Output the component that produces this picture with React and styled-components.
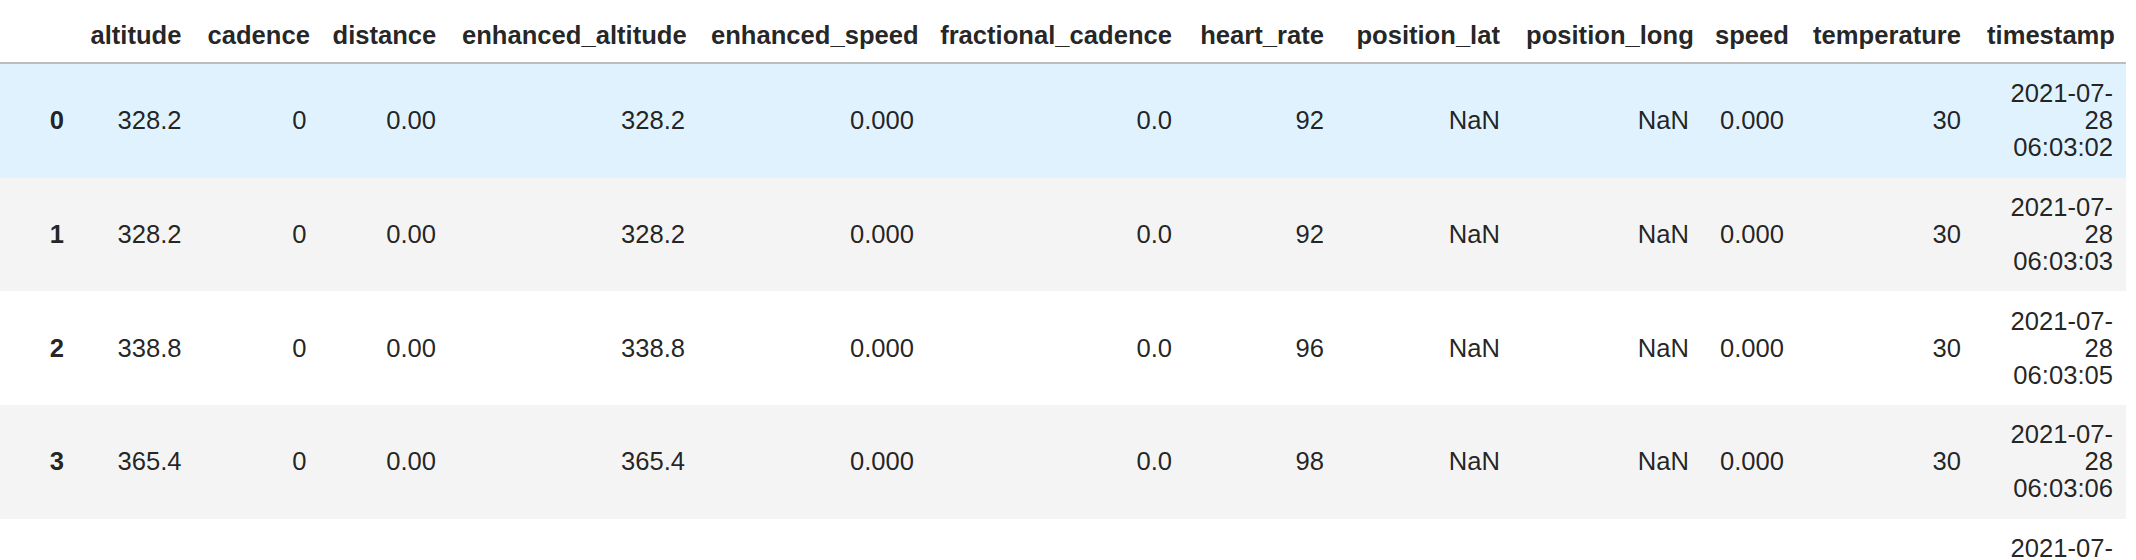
import React from "react";
import styled, { createGlobalStyle } from "styled-components";

const GlobalStyle = createGlobalStyle`
  html, body {
    margin: 0;
    padding: 0;
    background: #ffffff;
    overflow: hidden;
  }
  body {
    font-family: "Liberation Sans", Arial, sans-serif;
  }
`;

const Output = styled.div`
  padding-top: 9px;
`;

const Table = styled.table`
  width: 2126px;
  table-layout: fixed;
  border-collapse: separate;
  border-spacing: 0;
  font-size: 25.6px;
  line-height: 27px;
  color: rgba(0, 0, 0, 0.87);
`;

const Col = styled.col`
  width: ${({ $w }) => $w}px;
`;

const HeadCell = styled.th`
  padding: 13px;
  text-align: right;
  font-weight: 700;
  vertical-align: bottom;
  white-space: nowrap;
  border-bottom: 2px solid #bdbdbd;
`;

const Row = styled.tr`
  background: ${({ $hover, $odd }) =>
    $hover ? "#e0f2fd" : $odd ? "#f4f4f4" : "#ffffff"};
`;

const IndexCell = styled.th`
  padding: 16.35px 13px;
  text-align: right;
  font-weight: 700;
  vertical-align: middle;
`;

const Cell = styled.td`
  padding: 16.35px 13px;
  text-align: right;
  vertical-align: middle;
  white-space: nowrap;
`;

const Line = styled.span`
  display: block;
`;

// column widths measured from the output cell grid
const columns = [
  { key: "", w: 77 },
  { key: "altitude", w: 117.5 },
  { key: "cadence", w: 125 },
  { key: "distance", w: 129.5 },
  { key: "enhanced_altitude", w: 249 },
  { key: "enhanced_speed", w: 229 },
  { key: "fractional_cadence", w: 258 },
  { key: "heart_rate", w: 152 },
  { key: "position_lat", w: 176 },
  { key: "position_long", w: 189 },
  { key: "speed", w: 95 },
  { key: "temperature", w: 177 },
  { key: "timestamp", w: 152 },
];

const rows = [
  ["328.2", "0", "0.00", "328.2", "0.000", "0.0", "92", "NaN", "NaN", "0.000", "30", "06:03:02"],
  ["328.2", "0", "0.00", "328.2", "0.000", "0.0", "92", "NaN", "NaN", "0.000", "30", "06:03:03"],
  ["338.8", "0", "0.00", "338.8", "0.000", "0.0", "96", "NaN", "NaN", "0.000", "30", "06:03:05"],
  ["365.4", "0", "0.00", "365.4", "0.000", "0.0", "98", "NaN", "NaN", "0.000", "30", "06:03:06"],
  ["365.4", "0", "0.00", "365.4", "0.000", "0.0", "98", "NaN", "NaN", "0.000", "30", "06:03:07"],
];

function Timestamp({ time }) {
  return (
    <>
      <Line>2021-07-</Line>
      <Line>28</Line>
      <Line>{time}</Line>
    </>
  );
}

export default function App() {
  return (
    <Output>
      <GlobalStyle />
      <Table>
        <colgroup>
          {columns.map((c) => (
            <Col key={c.key || "index"} $w={c.w} />
          ))}
        </colgroup>
        <thead>
          <tr>
            {columns.map((c) => (
              <HeadCell key={c.key || "index"}>{c.key}</HeadCell>
            ))}
          </tr>
        </thead>
        <tbody>
          {rows.map((values, i) => (
            <Row key={i} $hover={i === 0} $odd={i % 2 === 1}>
              <IndexCell>{i}</IndexCell>
              {values.map((v, j) =>
                j === values.length - 1 ? (
                  <Cell key={j}>
                    <Timestamp time={v} />
                  </Cell>
                ) : (
                  <Cell key={j}>{v}</Cell>
                )
              )}
            </Row>
          ))}
        </tbody>
      </Table>
    </Output>
  );
}
